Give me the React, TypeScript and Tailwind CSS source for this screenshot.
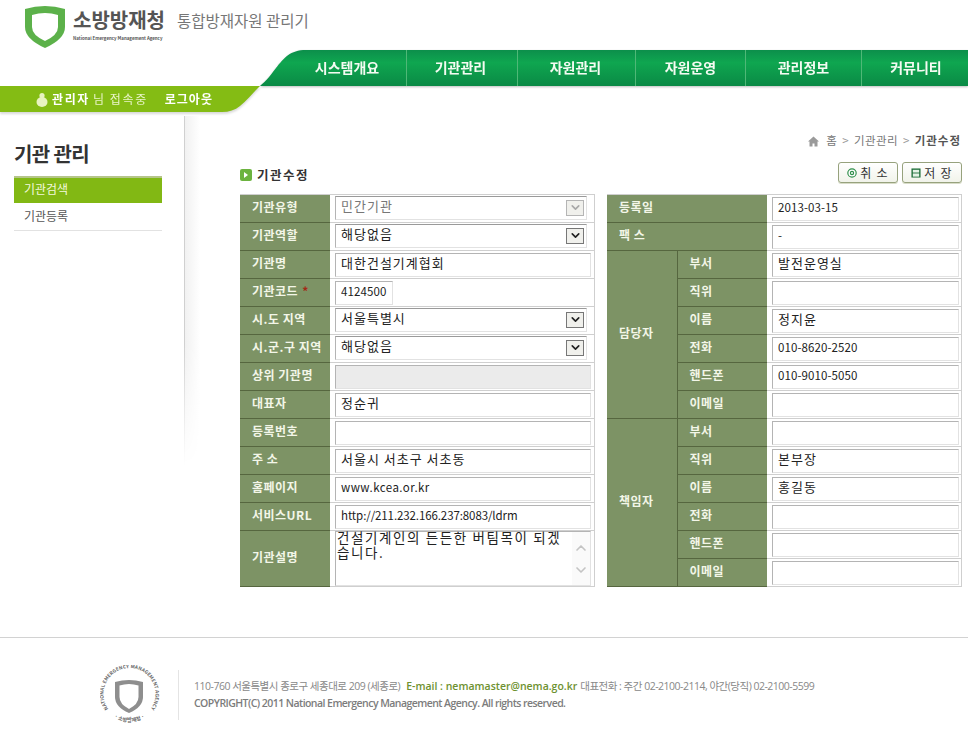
import { ChevronDown, ChevronUp } from 'lucide-react';
import clsx from 'clsx';

const menus = [
  { label: '시스템개요', width: 'w-[101px] pr-[18px]' },
  { label: '기관관리', width: 'w-[111px] pr-[3px]' },
  { label: '자원관리', width: 'w-[118px] pr-[2px]' },
  { label: '자원운영', width: 'w-[110px]' },
  { label: '관리정보', width: 'w-[116px]' },
  { label: '커뮤니티', width: 'w-[106px] pl-[2px]' },
];

type Field =
  | { label: string; kind: 'select'; value: string; disabled?: boolean }
  | { label: string; kind: 'input'; value?: string; latin?: string; short?: boolean; disabled?: boolean };

const latinText = 'text-[11.5px] tracking-[0.1px]';

const leftFields: Field[] = [
  { label: '기관유형', kind: 'select', value: '민간기관', disabled: true },
  { label: '기관역할', kind: 'select', value: '해당없음' },
  { label: '기관명', kind: 'input', value: '대한건설기계협회' },
  { label: '기관코드', kind: 'input', value: '4124500', latin: latinText, short: true },
  { label: '시.도 지역', kind: 'select', value: '서울특별시' },
  { label: '시.군.구 지역', kind: 'select', value: '해당없음' },
  { label: '상위 기관명', kind: 'input', disabled: true },
  { label: '대표자', kind: 'input', value: '정순귀' },
  { label: '등록번호', kind: 'input' },
  { label: '주 소', kind: 'input', value: '서울시 서초구 서초동' },
  { label: '홈페이지', kind: 'input', value: 'www.kcea.or.kr', latin: 'text-[11.5px] tracking-[0.45px]' },
  { label: '서비스URL', kind: 'input', value: 'http://211.232.166.237:8083/ldrm', latin: 'text-[11.5px] tracking-[-0.1px]' },
];

const contactLabels = ['부서', '직위', '이름', '전화', '핸드폰', '이메일'];
const contacts = [
  { title: '담당자', values: ['발전운영실', '', '정지윤', '010-8620-2520', '010-9010-5050', ''] },
  { title: '책임자', values: ['', '본부장', '홍길동', '', '', ''] },
];

const thClass =
  'h-[28px] border-b border-[#56663f] bg-[#7d9365] pb-[4px] pl-[12px] text-left align-middle text-[12px] font-bold tracking-[0.5px] text-[#f3f6e8]';
const tdClass = 'h-[28px] border-b border-[#cfcfcf] bg-white align-middle';

function TextField({ value = '', latin, short, disabled }: { value?: string; latin?: string; short?: boolean; disabled?: boolean }) {
  return (
    <input
      readOnly
      defaultValue={value}
      className={clsx(
        'block h-[24px] border border-t-[#b4b4b4] border-r-[#e2e2e2] border-b-[#e2e2e2] border-l-[#b4b4b4] px-[5px] pb-[4px] text-[#222] outline-none',
        latin || 'text-[13px] tracking-[1px]',
        short ? 'w-[58px]' : 'w-full',
        disabled ? 'bg-[#ebebeb]' : 'bg-white'
      )}
    />
  );
}

function SelectField({ value, disabled }: { value: string; disabled?: boolean }) {
  return (
    <div className="mb-[2px] flex h-[24px] w-[252px] items-center justify-between border border-t-[#9a9a9a] border-r-[#e2e2e2] border-b-[#e2e2e2] border-l-[#b4b4b4] bg-white pr-[2px] pl-[5px]">
      <span className={clsx('pb-[4px] text-[13px] tracking-[1px]', disabled ? 'text-[#777]' : 'text-[#222]')}>{value}</span>
      <span
        className={clsx(
          'flex h-[16px] w-[18px] items-center justify-center border bg-[#f0f0ec]',
          disabled ? 'border-[#b5b5b5]' : 'border-[#777]'
        )}
      >
        <ChevronDown size={13} strokeWidth={3} className={disabled ? 'text-[#a8a8a8]' : 'text-[#222]'} />
      </span>
    </div>
  );
}

function LeftTable() {
  return (
    <table className="w-[355px] table-fixed border-collapse border-t border-r border-[#cfcfcf]">
      <tbody>
        {leftFields.map((f) => (
          <tr key={f.label}>
            <th className={clsx(thClass, 'w-[90px]')}>
              {f.label}
              {f.label === '기관코드' && <span className="ml-[4px] text-[#a32a16]">*</span>}
            </th>
            <td className={clsx(tdClass, 'pr-[3px] pl-[5px]')}>
              {f.kind === 'select' ? (
                <SelectField value={f.value} disabled={f.disabled} />
              ) : (
                <TextField value={f.value} latin={f.latin} short={f.short} disabled={f.disabled} />
              )}
            </td>
          </tr>
        ))}
        <tr>
          <th className={clsx(thClass, 'h-[56px]')}>기관설명</th>
          <td className={clsx(tdClass, 'h-[56px] pr-[3px] pl-[5px]')}>
            <div className="flex h-[55px] border border-t-[#b4b4b4] border-r-[#e2e2e2] border-b-[#e2e2e2] border-l-[#b4b4b4]">
              <textarea
                readOnly
                defaultValue="건설기계인의 든든한 버팀목이 되겠습니다."
                className="-mt-[2px] h-[54px] w-[236px] resize-none overflow-hidden pl-[1px] text-[13.5px] leading-[15px] tracking-[1.6px] text-[#222] outline-none"
              />
              <div className="flex flex-1 flex-col items-center justify-center gap-[6px] bg-[#fafafa] text-[#c4c4c4]">
                <ChevronUp size={16} strokeWidth={2.5} />
                <ChevronDown size={16} strokeWidth={2.5} />
              </div>
            </div>
          </td>
        </tr>
      </tbody>
    </table>
  );
}

function RightTable() {
  return (
    <table className="w-[355px] table-fixed border-collapse border-t border-r border-[#cfcfcf]">
      <colgroup>
        <col className="w-[70px]" />
        <col className="w-[90px]" />
        <col />
      </colgroup>
      <tbody>
        <tr>
          <th colSpan={2} className={thClass}>등록일</th>
          <td className={clsx(tdClass, 'pr-[2px] pl-[5px]')}><TextField value="2013-03-15" latin={latinText} /></td>
        </tr>
        <tr>
          <th colSpan={2} className={thClass}>팩 스</th>
          <td className={clsx(tdClass, 'pr-[2px] pl-[5px]')}><TextField value="-" latin={latinText} /></td>
        </tr>
        {contacts.map((group) =>
          contactLabels.map((label, i) => (
            <tr key={group.title + label}>
              {i === 0 && (
                <th rowSpan={6} className={clsx(thClass, 'border-r')}>{group.title}</th>
              )}
              <th className={thClass}>{label}</th>
              <td className={clsx(tdClass, 'pr-[2px] pl-[5px]')}>
                <TextField value={group.values[i]} latin={/^[0-9-]+$/.test(group.values[i]) ? latinText : undefined} />
              </td>
            </tr>
          ))
        )}
      </tbody>
    </table>
  );
}

function ActionButton({ label, icon }: { label: string; icon: React.ReactNode }) {
  return (
    <button className="flex h-[21px] w-[60px] items-center justify-center gap-[3px] rounded-[3px] border border-[#97a27d] bg-gradient-to-b from-white to-[#f1f3ea] text-[12px] tracking-[1.2px] text-[#333] shadow-[0_1px_0_#d8dcc8]">
      {icon}
      {label}
    </button>
  );
}

function ShieldLogo() {
  return (
    <svg width="40" height="44" viewBox="0 0 40 44" className="shrink-0">
      <path d="M0 4 Q20 -2 40 4 V22 Q40 34 20 43 Q0 34 0 22Z" fill="#5cb14a" />
      <path d="M7 10 Q20 6 33 10 V22 Q33 30 20 36 Q7 30 7 22Z" fill="#fff" />
    </svg>
  );
}

function FooterSeal() {
  return (
    <svg width="60" height="60" viewBox="0 0 60 60" className="shrink-0">
      <defs>
        <path id="seal-top" d="M11.1 47.4 A26 26 0 1 1 47.9 47.4" />
        <path id="seal-bottom" d="M9.5 48.6 A28 28 0 0 0 49.5 48.6" />
      </defs>
      <text fontSize="4.8" fontWeight="700" fill="#666" letterSpacing="0.1" textAnchor="middle">
        <textPath href="#seal-top" startOffset="50%">NATIONAL EMERGENCY MANAGEMENT AGENCY</textPath>
      </text>
      <text fontSize="5.2" fontWeight="700" fill="#666" textAnchor="middle">
        <textPath href="#seal-bottom" startOffset="50%">· 소방방재청 ·</textPath>
      </text>
      <path d="M15 17 Q29 13 43 17 V32 Q43 42 29 48 Q15 42 15 32Z" fill="#8e8e8e" />
      <path d="M19.5 20.5 Q29 17.5 38.5 20.5 V32 Q38.5 39 29 44 Q19.5 39 19.5 32Z" fill="#fff" />
    </svg>
  );
}

export default function App() {
  return (
    <div className="h-[736px] w-[968px] overflow-hidden bg-white font-['Noto_Sans_CJK_KR','Liberation_Sans',sans-serif]">
      {/* Logo */}
      <header className="flex h-[50px] items-start pt-[5px] pl-[25px]">
        <ShieldLogo />
        <div className="ml-[8px] flex flex-col">
          <span className="text-[20px] leading-[30px] font-bold text-[#555]">소방방재청</span>
          <span className="text-[4.4px] leading-[6px] font-bold whitespace-nowrap text-[#555]">National Emergency Management Agency</span>
        </div>
        <span className="mt-[4px] ml-[12px] text-[15.5px] leading-[22px] text-[#777]">통합방재자원 관리기</span>
      </header>

      {/* Main menu */}
      <nav className="ml-[260px] flex h-[36px] drop-shadow-[0_1px_1px_rgba(0,0,0,0.25)]">
        <svg width="46" height="36" viewBox="0 0 46 36" className="shrink-0">
          <defs>
            <linearGradient id="nav-grad" x1="0" y1="0" x2="0" y2="1">
              <stop offset="0" stopColor="#0c8f4b" />
              <stop offset="0.35" stopColor="#0fa650" />
              <stop offset="1" stopColor="#0a8a45" />
            </linearGradient>
          </defs>
          <path d="M46 0 C30 0 24 8 16 18 C10 26 6 31 0 36 H46Z" fill="url(#nav-grad)" />
        </svg>
        <ul className="flex flex-1 bg-gradient-to-b from-[#0c8f4b] via-[#0fa650] via-35% to-[#0a8a45]">
          {menus.map((m, i) => (
            <li
              key={m.label}
              className={clsx(
                'flex items-center justify-center pb-[2px] text-[14px] font-bold text-[#f4fbf2]',
                m.width,
                i < menus.length - 1 && 'border-r border-[#4fb877]'
              )}
            >
              {m.label}
            </li>
          ))}
        </ul>
      </nav>

      {/* Login bar */}
      <div className="flex h-[26px] w-[260px] drop-shadow-[0_2px_1px_rgba(0,0,0,0.15)]">
        <div className="flex w-[222px] items-center bg-[#84bc14] pl-[36px] text-[12px] tracking-[1.6px] text-[#e9f4c8]">
          <svg width="12" height="15" viewBox="0 0 12 15" className="mr-[4px] shrink-0">
            <circle cx="6" cy="3.5" r="2.6" fill="#e8f3c0" />
            <ellipse cx="6" cy="10" rx="5.5" ry="5" fill="#e8f3c0" />
          </svg>
          <span className="font-bold text-white">관리자</span>
          <span className="ml-[3px]">님 접속중</span>
          <span className="ml-[17px] font-bold tracking-[1px] text-white">로그아웃</span>
        </div>
        <svg width="38" height="26" viewBox="0 0 38 26" className="shrink-0">
          <path d="M0 0 H38 C30 8 24 15 18 20 C13 24 7 26 0 26Z" fill="#84bc14" />
        </svg>
      </div>

      <div className="flex h-[525px]">
        {/* Side menu */}
        <aside className="w-[184px] pt-[26px] pl-[14px]">
          <h2 className="text-[20px] leading-[32px] font-bold tracking-[-0.6px] text-[#333]">기관 관리</h2>
          <ul className="mt-[6px] w-[148px] text-[12px]">
            <li className="flex h-[27px] items-center border-t-2 border-[#b5c58a] bg-[#82b814] pb-[3px] pl-[10px] text-[#f3f8dd]">기관검색</li>
            <li className="flex h-[28px] items-center border-b border-[#e2e2e2] pb-[1px] pl-[10px] text-[#555]">기관등록</li>
          </ul>
        </aside>
        <div className="mt-[4px] h-[350px] w-[16px] border-l border-[#d0d0d0] bg-gradient-to-r from-[#f1f1f1] to-white [mask-image:linear-gradient(to_bottom,black_65%,transparent)]" />

        {/* Content */}
        <main className="flex-1 pt-[21px] pr-[6px] pl-[40px]">
          <div className="flex h-[16px] items-center justify-end gap-[5px] pr-[1px] text-[11.5px] tracking-[0.4px] text-[#777]">
            <svg width="11" height="11" viewBox="0 0 11 11" className="mr-[2px]">
              <path d="M5.5 0.5 L11 5.5 H9.5 V10.5 H6.5 V7.5 H4.5 V10.5 H1.5 V5.5 H0Z" fill="#9a9a9a" />
            </svg>
            <span>홈</span>
            <span className="text-[#999]">&gt;</span>
            <span>기관관리</span>
            <span className="text-[#999]">&gt;</span>
            <span className="font-bold tracking-[1px] text-[#555]">기관수정</span>
          </div>

          <div className="mt-[13px] flex h-[21px] items-center justify-between">
            <div className="flex items-center gap-[5px] pt-[4px]">
              <span className="flex h-[12px] w-[12px] items-center justify-center rounded-[2px] bg-[#6cb33f]">
                <span className="h-0 w-0 border-y-[3px] border-l-[4px] border-y-transparent border-l-white" />
              </span>
              <h3 className="pt-[1px] text-[12.5px] font-bold tracking-[1.5px] text-[#333]">기관수정</h3>
            </div>
            <div className="flex gap-[4px]">
              <ActionButton
                label="취 소"
                icon={
                  <svg width="10" height="10" viewBox="0 0 11 11">
                    <circle cx="5.5" cy="5.5" r="4.6" fill="#fff" stroke="#2f8f4a" strokeWidth="1.3" />
                    <circle cx="5.5" cy="5.5" r="2.4" fill="#2f8f4a" />
                    <path d="M4.4 4.4 L6.6 6.6 M6.6 4.4 L4.4 6.6" stroke="#fff" strokeWidth="0.8" />
                  </svg>
                }
              />
              <ActionButton
                label="저 장"
                icon={
                  <svg width="10" height="10" viewBox="0 0 11 11">
                    <rect x="0.5" y="0.5" width="10" height="10" fill="#1f6f3a" />
                    <rect x="2" y="2" width="7" height="3" fill="#e4f2e6" />
                    <rect x="2" y="6" width="7" height="3.5" fill="#e4f2e6" />
                  </svg>
                }
              />
            </div>
          </div>

          <div className="mt-[11px] flex items-start gap-[12px]">
            <LeftTable />
            <RightTable />
          </div>
        </main>
      </div>

      {/* Footer */}
      <footer className="flex h-[99px] border-t border-[#d2d2d2] pt-[27px] pl-[100px]">
        <FooterSeal />
        <div className="mt-[5px] ml-[18px] h-[50px] border-l border-[#e4e4e4] pl-[15px] font-['Open_Sans','Noto_Sans_CJK_KR',sans-serif] text-[10.5px] leading-[17px] whitespace-nowrap text-[#888]">
          <p className="mt-[8px]">
            <span className="tracking-[-0.5px]">110-760 서울특별시 종로구 세종대로 209 (세종로)</span>
            <span className="ml-[6px] font-semibold text-[#6d9130]">E-mail : nemamaster@nema.go.kr</span>
            <span className="ml-[3px] tracking-[-0.5px]">대표전화 : 주간 02-2100-2114, 야간(당직) 02-2100-5599</span>
          </p>
          <p className="font-semibold tracking-[-0.55px] text-[#7c7c7c]">COPYRIGHT(C) 2011 National Emergency Management Agency. All rights reserved.</p>
        </div>
      </footer>
    </div>
  );
}
